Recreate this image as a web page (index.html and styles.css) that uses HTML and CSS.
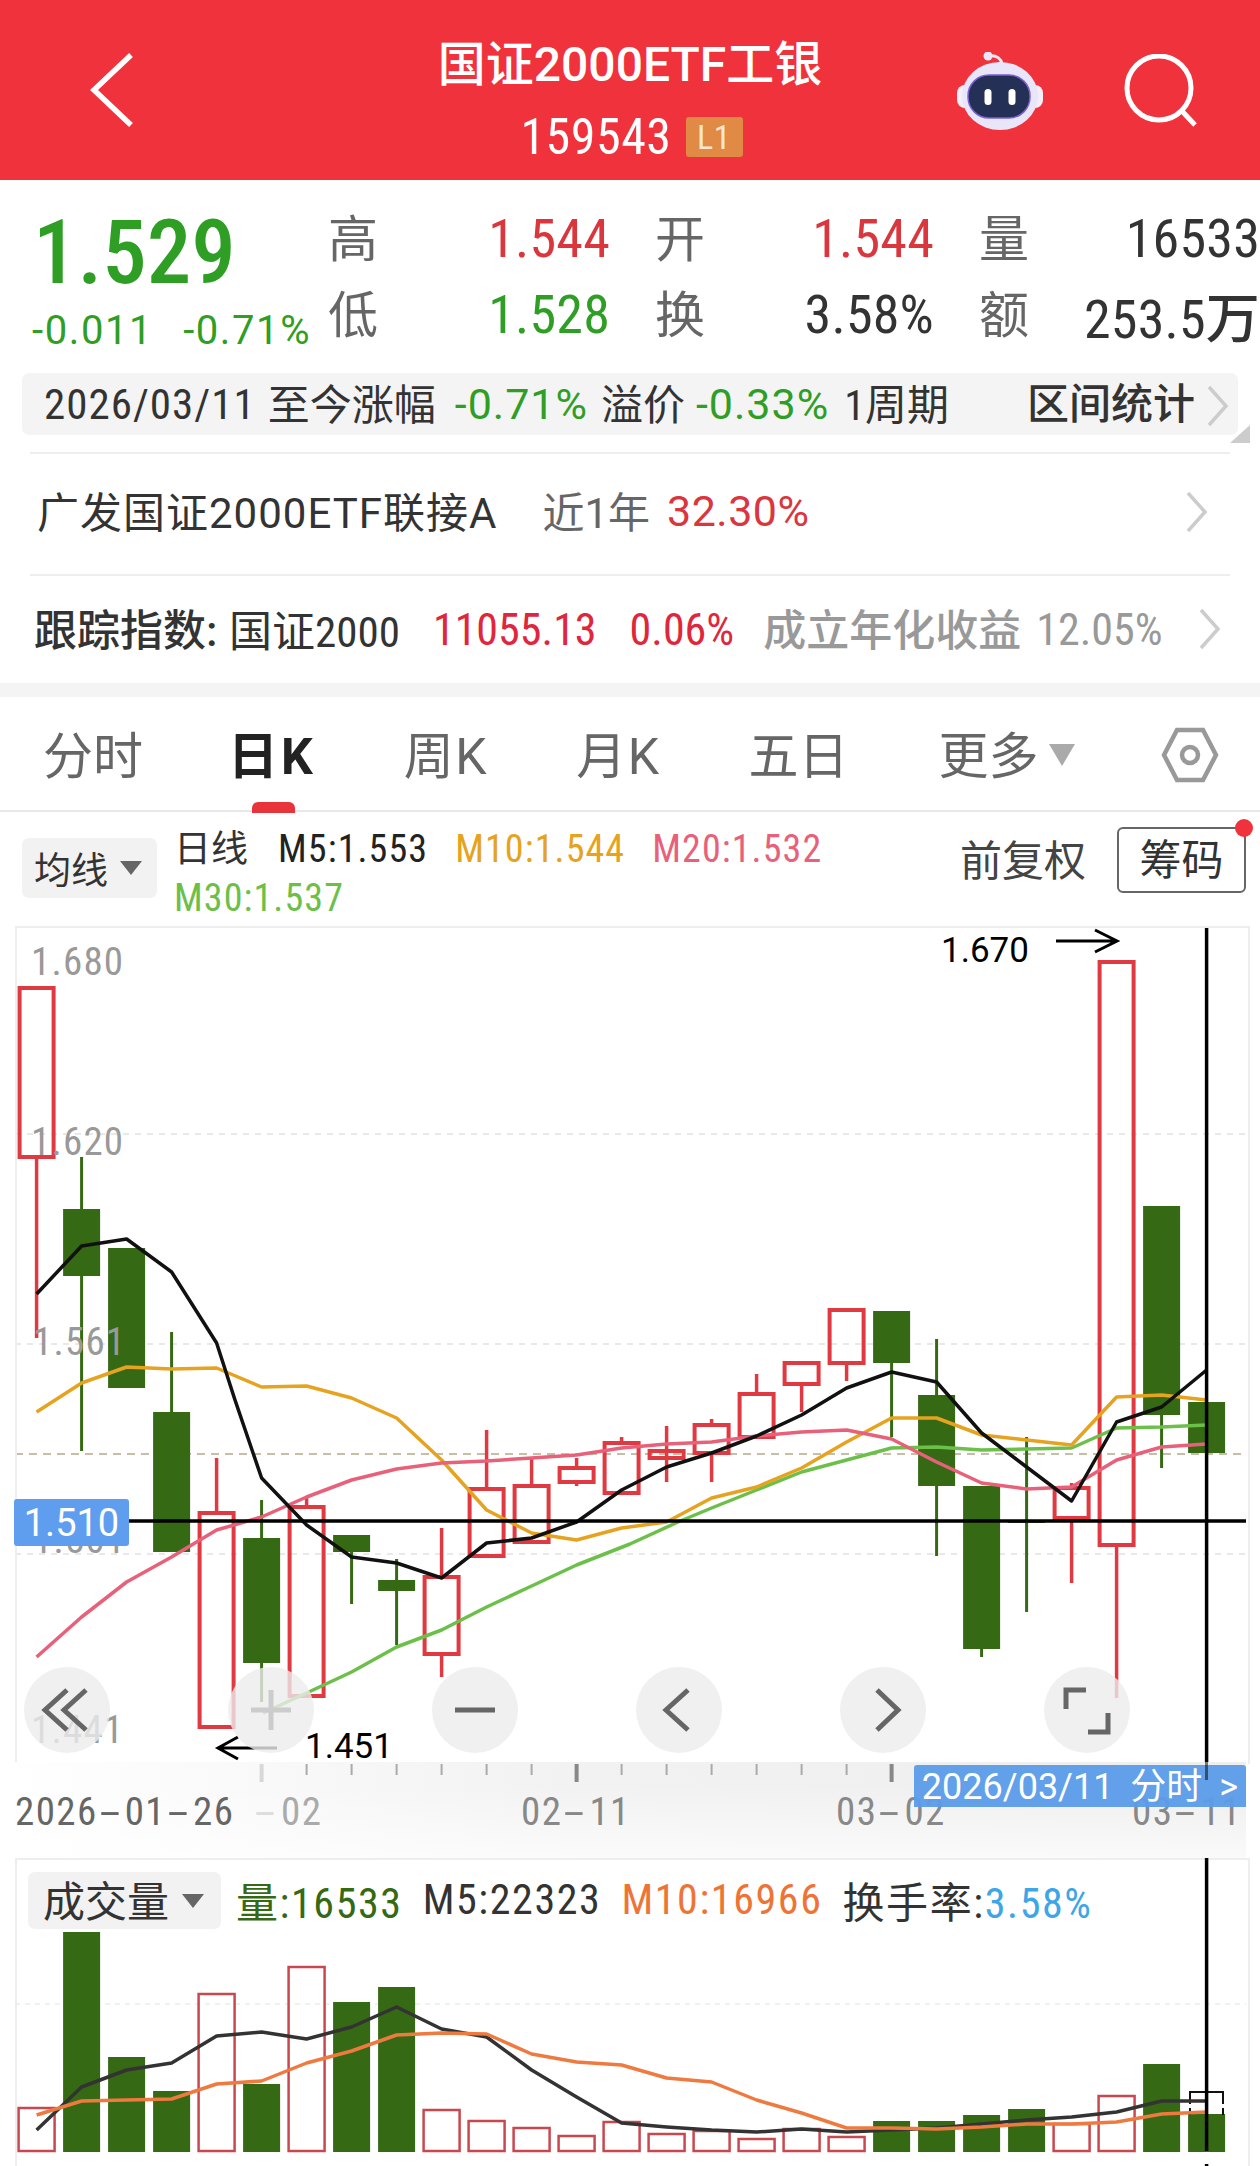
FILE: index.html
```html
<!DOCTYPE html>
<html lang="zh-CN">
<head>
    <meta charset="UTF-8">
    <meta name="viewport" content="width=device-width, initial-scale=1.0">
    <title>国证2000ETF工银</title>
    <link rel="stylesheet" href="styles.css">
</head>
<body>

    <div class="topbar">
        <div class="topbar-left">
            <svg class="back-icon" viewBox="0 0 44 76"><path d="M41 3 L4 38 L41 73"/></svg>
        </div>
        <div class="topbar-title">
            <div class="name">国证2000ETF工银</div>
            <div class="code">159543 <span class="badge">L1</span></div>
        </div>
        <div class="topbar-right">
            <svg class="robot-icon" viewBox="0 0 90 80">
                <path class="robot-wire" d="M34 4 C42 3 46 7 47 12"/>
                <circle class="robot-head" cx="33" cy="4" r="4.5"/>
                <rect class="robot-ear" x="2" y="33" width="86" height="23" rx="8"/>
                <ellipse class="robot-head" cx="45" cy="44" rx="38" ry="34"/>
                <rect class="robot-face" x="13" y="23" width="62" height="43" rx="21"/>
                <rect class="robot-eye" x="29.5" y="37" width="7" height="16" rx="3.5"/>
                <rect class="robot-eye" x="53.5" y="37" width="7" height="16" rx="3.5"/>
            </svg>
            <svg class="search-icon" viewBox="0 0 76 76"><circle cx="36" cy="34" r="32"/><path d="M58 56 L72 71"/></svg>
        </div>
    </div>

    <div class="quote">
        <div class="quote-main">
            <div class="price">
                <div class="price-now">1.529</div>
                <div class="price-change"><span>-0.011</span><span>-0.71%</span></div>
            </div>
            <div class="stats">
                <div class="stat"><span class="stat-label">高</span><span class="stat-value red">1.544</span></div>
                <div class="stat"><span class="stat-label">开</span><span class="stat-value red">1.544</span></div>
                <div class="stat"><span class="stat-label">量</span><span class="stat-value">16533</span></div>
                <div class="stat"><span class="stat-label">低</span><span class="stat-value green">1.528</span></div>
                <div class="stat"><span class="stat-label">换</span><span class="stat-value">3.58%</span></div>
                <div class="stat"><span class="stat-label">额</span><span class="stat-value">253.5万</span></div>
            </div>
        </div>
        <div class="period-bar">
            <span class="period-date">2026/03/11</span>
            <span class="period-cn">至今涨幅</span>
            <span class="period-num green">-0.71%</span>
            <span class="period-cn">溢价</span>
            <span class="period-num period-tight green">-0.33%</span>
            <span class="period-cn">1周期</span>
            <span class="period-link">区间统计</span>
            <svg class="chevron" viewBox="0 0 24 42"><path d="M3 2 L20 21 L3 40"/></svg>
            <span class="period-corner"></span>
        </div>
    </div>

    <div class="info-row fund-row">
        <span class="fund-name">广发国证2000ETF联接A</span>
        <span class="fund-term">近1年</span>
        <span class="fund-rate">32.30%</span>
        <svg class="chevron chevron-fund" viewBox="0 0 24 42"><path d="M3 2 L20 21 L3 40"/></svg>
    </div>

    <div class="info-row index-row">
        <span class="index-name">跟踪指数: </span>
        <span class="index-title">国证2000</span>
        <span class="index-num">11055.13</span>
        <span class="index-num index-pct">0.06%</span>
        <span class="index-gray">成立年化收益</span>
        <span class="index-gray-num">12.05%</span>
        <svg class="chevron chevron-index" viewBox="0 0 24 42"><path d="M3 2 L20 21 L3 40"/></svg>
    </div>

    <div class="band"></div>

    <div class="tabs">
        <span class="tab">分时</span>
        <span class="tab tab-active">日K</span>
        <span class="tab tab-k">周K</span>
        <span class="tab tab-k">月K</span>
        <span class="tab">五日</span>
        <span class="tab tab-more">更多<i class="tab-arrow"></i></span>
        <svg class="hex-icon" viewBox="0 0 58 56"><path d="M16 3 H42 L55 28 L42 53 H16 L3 28 Z"/><circle cx="29" cy="28" r="8"/></svg>
    </div>

    <div class="legend">
        <div class="select-box ma-select">均线<i class="select-arrow"></i></div>
        <div class="ma-values">
            <span class="ma-title">日线</span>
            <span class="ma ma5">M5:1.553</span>
            <span class="ma ma10">M10:1.544</span>
            <span class="ma ma20">M20:1.532</span>
            <span class="ma ma30">M30:1.537</span>
        </div>
        <span class="adjust">前复权</span>
        <span class="chip-btn">筹码<i class="chip-dot"></i></span>
    </div>

    <div class="kline">
        <svg class="kline-svg" viewBox="0 926 1260 836">
            <path class="grid" d="M15 1134 H1246 M15 1344 H1246 M15 1554 H1246"/>
            <path class="prev-close" d="M15 1454 H1246"/>

            <path class="wick-up" d="M36.6 1157V1338 M216.6 1458V1513 M306.6 1498V1507 M441.6 1528V1577 M441.6 1654V1677 M486.6 1430V1489 M531.6 1457V1486 M576.6 1458V1468 M576.6 1482V1486 M621.6 1437V1443 M666.6 1426V1482 M711.6 1419V1425 M711.6 1453V1482 M756.6 1374V1394 M801.6 1384V1412 M846.6 1363V1381 M1071.6 1483V1488 M1071.6 1518V1583 M1116.6 1545V1698"/>
            <path class="wick-down" d="M81.6 1157V1451 M171.6 1332V1412 M261.6 1500V1702 M351.6 1552V1604 M396.6 1559V1645 M891.6 1363V1437 M936.6 1339V1556 M981.6 1649V1657 M1026.6 1437V1612 M1161.6 1415V1468"/>

            <g class="body-up">
                <rect x="19.6" y="988" width="34" height="169"/>
                <rect x="199.6" y="1513" width="34" height="214"/>
                <rect x="289.6" y="1507" width="34" height="189"/>
                <rect x="424.6" y="1577" width="34" height="77"/>
                <rect x="469.6" y="1489" width="34" height="67"/>
                <rect x="514.6" y="1486" width="34" height="56"/>
                <rect x="559.6" y="1468" width="34" height="14"/>
                <rect x="604.6" y="1443" width="34" height="50"/>
                <rect x="649.6" y="1451" width="34" height="7"/>
                <rect x="694.6" y="1425" width="34" height="28"/>
                <rect x="739.6" y="1394" width="34" height="43"/>
                <rect x="784.6" y="1363" width="34" height="21"/>
                <rect x="829.6" y="1310" width="34" height="53"/>
                <rect x="1054.6" y="1488" width="34" height="30"/>
                <rect x="1099.6" y="962" width="34" height="583"/>
            </g>
            <g class="body-down">
                <rect x="63.1" y="1209" width="37" height="67"/>
                <rect x="108.1" y="1248" width="37" height="140"/>
                <rect x="153.1" y="1412" width="37" height="140"/>
                <rect x="243.1" y="1538" width="37" height="125"/>
                <rect x="333.1" y="1535" width="37" height="17"/>
                <rect x="378.1" y="1580" width="37" height="11"/>
                <rect x="873.1" y="1311" width="37" height="52"/>
                <rect x="918.1" y="1395" width="37" height="91"/>
                <rect x="963.1" y="1486" width="37" height="163"/>
                <rect x="1008.1" y="1520" width="37" height="3"/>
                <rect x="1143.1" y="1206" width="37" height="209"/>
                <rect x="1188.1" y="1402" width="37" height="51"/>
            </g>

            <text class="axis-num" x="31" y="975">1.680</text>
            <text class="axis-num" x="31" y="1155">1.620</text>
            <text class="axis-num" x="33" y="1355">1.561</text>
            <text class="axis-num" x="33" y="1553">1.501</text>
            <text class="axis-num" x="31" y="1743">1.441</text>

            <polyline class="line-ma30" points="263,1713 306.6,1693 351.6,1672 396.6,1647 441.6,1630 486.6,1607 531.6,1586 576.6,1565 630,1544 678,1522 711.6,1508 756.6,1490 801.6,1472 846.6,1460 891.6,1448 936.6,1447 981.6,1450 1026.6,1449 1071.6,1448 1116.6,1428 1161.6,1427 1206.6,1425"/>
            <polyline class="line-ma10" points="36.6,1412 81.6,1383 126.6,1367 171.6,1369 216.6,1368 261.6,1387 306.6,1386 351.6,1398 396.6,1418 441.6,1460 486.6,1510 531.6,1533 576.6,1540 621.6,1528 666.6,1522 711.6,1498 756.6,1487 801.6,1468 846.6,1442 891.6,1418 936.6,1418 981.6,1435 1026.6,1440 1071.6,1445 1116.6,1397 1161.6,1395 1206.6,1400"/>
            <polyline class="line-ma20" points="36.6,1657 81.6,1617 126.6,1582 171.6,1557 216.6,1530 261.6,1517 306.6,1497 351.6,1480 396.6,1469 441.6,1463 486.6,1461 531.6,1458 576.6,1455 621.6,1448 666.6,1444 711.6,1442 756.6,1436 801.6,1432 846.6,1430 891.6,1439 936.6,1462 981.6,1483 1026.6,1489 1071.6,1487 1116.6,1460 1161.6,1447 1206.6,1444"/>
            <polyline class="line-ma5" points="36.6,1294 81.6,1246 126.6,1239 171.6,1272 216.6,1343 235,1400 261.6,1478 306.6,1525 351.6,1557 396.6,1563 441.6,1578 486.6,1543 531.6,1538 576.6,1522 621.6,1490 666.6,1467 711.6,1453 756.6,1436 801.6,1415 846.6,1388 891.6,1372 936.6,1382 981.6,1433 1026.6,1467 1071.6,1501 1116.6,1422 1161.6,1407 1206.6,1370"/>

            <path class="cross" d="M129 1521 H1246 M1206.6 926 V1762"/>

            <text class="mark-num" x="941" y="962">1.670</text>
            <path class="mark-arrow" d="M1056 941 H1116 M1095 930 L1117 941 L1095 952"/>
            <text class="mark-num" x="305" y="1758">1.451</text>
            <path class="mark-arrow" d="M277 1748 H218 M238 1737 L218 1748 L238 1759"/>
        </svg>

        <div class="price-tag">1.510</div>

        <div class="tools">
            <span class="tool"><svg viewBox="0 0 86 86"><path d="M43 23 L21 43 L43 63 M62 23 L40 43 L62 63"/></svg></span>
            <span class="tool tool-faint"><svg viewBox="0 0 86 86"><path d="M23 43 H63 M43 23 V63"/></svg></span>
            <span class="tool"><svg viewBox="0 0 86 86"><path d="M23 43 H63"/></svg></span>
            <span class="tool"><svg viewBox="0 0 86 86"><path d="M52 23 L30 43 L52 63"/></svg></span>
            <span class="tool"><svg viewBox="0 0 86 86"><path d="M37 23 L58 43 L37 63"/></svg></span>
            <span class="tool"><svg viewBox="0 0 86 86"><path d="M22 42 V23 H42 M44 65 H64 V46"/></svg></span>
        </div>
    </div>

    <div class="time-axis">
        <svg class="ticks" viewBox="0 1762 1260 30">
            <path d="M306.6 1764V1775 M351.6 1764V1775 M396.6 1764V1775 M441.6 1764V1775 M486.6 1764V1775 M531.6 1764V1775 M621.6 1764V1775 M666.6 1764V1775 M711.6 1764V1775 M756.6 1764V1775 M801.6 1764V1775 M846.6 1764V1775"/>
            <path class="tick-faint" d="M261.6 1764V1782"/>
            <path class="tick-major" d="M576.6 1764V1782 M891.6 1764V1782"/>
        </svg>
        <span class="time-label time-first">2026<b>-</b>01<b>-</b>26</span>
        <span class="time-label time-faint"><b class="time-dash">-</b>02</span>
        <span class="time-label time-mid">02<b>-</b>11</span>
        <span class="time-label time-mar">03<b>-</b>02</span>
        <span class="time-label time-last">03<b>-</b>11</span>
        <div class="time-tag">2026/03/11 分时 &gt;</div>
        <i class="cross-tail"></i>
    </div>

    <div class="volume">
        <svg class="volume-svg" viewBox="0 1858 1260 308">
            <path class="grid-faint" d="M15 2004 H1246"/>
            <g class="vol-up">
                <rect x="18.6" y="2108" width="36" height="43"/>
                <rect x="198.6" y="1994" width="36" height="157"/>
                <rect x="288.6" y="1967" width="36" height="184"/>
                <rect x="423.6" y="2110" width="36" height="41"/>
                <rect x="468.6" y="2121" width="36" height="30"/>
                <rect x="513.6" y="2128" width="36" height="23"/>
                <rect x="558.6" y="2136" width="36" height="15"/>
                <rect x="603.6" y="2122" width="36" height="29"/>
                <rect x="648.6" y="2134" width="36" height="17"/>
                <rect x="693.6" y="2131" width="36" height="20"/>
                <rect x="738.6" y="2139" width="36" height="12"/>
                <rect x="783.6" y="2129" width="36" height="22"/>
                <rect x="828.6" y="2137" width="36" height="14"/>
                <rect x="1053.6" y="2124" width="36" height="27"/>
                <rect x="1098.6" y="2096" width="36" height="55"/>
            </g>
            <g class="vol-down">
                <rect x="63.1" y="1932" width="37" height="220"/>
                <rect x="108.1" y="2057" width="37" height="95"/>
                <rect x="153.1" y="2091" width="37" height="61"/>
                <rect x="243.1" y="2084" width="37" height="68"/>
                <rect x="333.1" y="2002" width="37" height="150"/>
                <rect x="378.1" y="1987" width="37" height="165"/>
                <rect x="873.1" y="2121" width="37" height="31"/>
                <rect x="918.1" y="2121" width="37" height="31"/>
                <rect x="963.1" y="2115" width="37" height="37"/>
                <rect x="1008.1" y="2109" width="37" height="43"/>
                <rect x="1143.1" y="2064" width="37" height="88"/>
                <rect x="1188.1" y="2114" width="37" height="38"/>
            </g>
            <path class="vol-dash" d="M1190 2104 V2092 H1223 V2104 M1190 2108 V2115 M1223 2108 V2115"/>
            <polyline class="vol-ma5" points="36.6,2130 81.6,2087 126.6,2070 171.6,2063 216.6,2036 261.6,2032 306.6,2039 351.6,2027 396.6,2007 441.6,2029 486.6,2037 531.6,2070 576.6,2097 621.6,2123 666.6,2127 711.6,2130 756.6,2132 801.6,2129 846.6,2132 891.6,2130 936.6,2128 981.6,2124 1026.6,2120 1071.6,2117 1116.6,2112 1161.6,2101 1206.6,2101"/>
            <polyline class="vol-ma10" points="36.6,2115 81.6,2101 126.6,2100 171.6,2099 216.6,2084 261.6,2081 306.6,2063 351.6,2051 396.6,2035 441.6,2033 486.6,2034 531.6,2054 576.6,2062 621.6,2065 666.6,2078 711.6,2082 756.6,2100 801.6,2113 846.6,2128 891.6,2128 936.6,2129 981.6,2127 1026.6,2124 1071.6,2124 1116.6,2122 1161.6,2114 1206.6,2112"/>
            <path class="cross" d="M1206.6 1858 V2151 M1206.6 2164 V2166"/>
        </svg>
        <div class="vol-legend">
            <div class="select-box vol-select"><span class="vol-select-text">成交量</span><i class="select-arrow"></i></div>
            <span class="vol-item vol-green">量:16533</span>
            <span class="vol-item vol-dark">M5:22323</span>
            <span class="vol-item vol-orange">M10:16966</span>
            <span class="vol-item vol-dark">换手率:<span class="vol-blue">3.58%</span></span>
        </div>
    </div>

</body>
</html>
```
FILE: styles.css
```css
* {
    margin: 0;
    padding: 0;
    box-sizing: border-box;
}

html, body {
    width: 1260px;
    height: 2166px;
    overflow: hidden;
    background: white;
}

body {
    font-family: Roboto, 'Noto Sans CJK SC', sans-serif;
    font-stretch: 80%;
    color: #333;
}

i {
    font-style: normal;
}

.red { color: #d9363e; }
.green { color: #2e9e24; }

/* top bar */
.topbar {
    height: 180px;
    background: #f0323c;
    display: grid;
    grid-template-columns: 1fr 400px 1fr;
    color: white;
}

.topbar-left {
    padding: 52px 0 0 90px;
    display: flex;
}

.back-icon {
    width: 44px;
    height: 76px;
    fill: none;
    stroke: white;
    stroke-width: 5.5;
}

.topbar-title {
    text-align: center;
    padding-top: 35px;
}

.name {
    font-size: 48px;
    line-height: 60px;
    font-weight: 500;
    font-stretch: 100%;
}

.code {
    font-size: 50px;
    line-height: 50px;
    font-weight: 450;
    letter-spacing: 0.5px;
    margin: 17px 0 0 3px;
    display: flex;
    justify-content: center;
    align-items: center;
    gap: 14px;
}

.badge {
    width: 57px;
    height: 40px;
    background: #e08a45;
    border-radius: 3px;
    font-size: 34px;
    line-height: 40px;
    font-weight: 400;
    color: #fbe6d2;
}

.topbar-right {
    display: flex;
    justify-content: flex-end;
    align-items: flex-start;
    gap: 78px;
    padding: 54px 61px 0 0;
}

.robot-icon {
    width: 90px;
    height: 80px;
    margin-top: -2px;
}

.robot-wire {
    fill: none;
    stroke: #f5e8f3;
    stroke-width: 3;
}

.robot-head { fill: #e8e6f8; }
.robot-ear { fill: #f3eef8; }

.robot-face {
    fill: #243056;
    stroke: #7a62cf;
    stroke-width: 1.5;
}

.robot-eye { fill: white; }

.search-icon {
    width: 76px;
    height: 76px;
    fill: none;
    stroke: white;
    stroke-width: 5;
}

/* quote */
.quote {
    height: 273px;
    position: relative;
}

.quote::after {
    content: "";
    position: absolute;
    left: 30px;
    right: 30px;
    bottom: -1px;
    height: 2px;
    background: #eee;
}

.quote-main {
    display: flex;
    padding: 20px 0 0 32px;
    height: 193px;
}

.price {
    width: 296px;
    color: #2e9e24;
}

.price-now {
    font-size: 89px;
    line-height: 86px;
    font-weight: 500;
    margin: 10px 0 0 1px;
}

.price-change {
    font-size: 40px;
    line-height: 40px;
    font-stretch: 90%;
    letter-spacing: 1.6px;
    margin-top: 15px;
    display: flex;
    gap: 30px;
    white-space: nowrap;
}

.stats {
    display: grid;
    grid-template-columns: 280px 277px 279px;
    grid-auto-rows: 76px;
    column-gap: 47px;
}

.stat {
    display: flex;
    justify-content: space-between;
    align-items: center;
}

.stat-label {
    font-size: 50px;
    color: #666;
    margin-top: -6px;
}

.stat-value {
    font-size: 54px;
    font-weight: 450;
    letter-spacing: 0.2px;
    white-space: nowrap;
    margin-right: -2px;
}

.period-bar {
    margin-left: 22px;
    width: 1216px;
    height: 62px;
    background: #f4f4f4;
    border-radius: 7px;
    display: flex;
    align-items: center;
    padding-left: 22px;
    white-space: nowrap;
    position: relative;
    font-size: 43px;
}

.period-date {
    letter-spacing: 1px;
    margin-right: 12px;
}

.period-num {
    font-stretch: 92%;
    letter-spacing: 1px;
    margin: 0 13px 0 19px;
}

.period-tight {
    margin-left: 11px;
    margin-right: 15px;
}

.period-cn {
    font-size: 42px;
    margin-top: -6px;
}

.period-link {
    position: absolute;
    left: 1005px;
    top: 1px;
    font-size: 42px;
    line-height: 62px;
    font-weight: 500;
}

.chevron {
    width: 24px;
    height: 42px;
    fill: none;
    stroke: #ccc;
    stroke-width: 3.5;
}

.period-bar .chevron {
    position: absolute;
    left: 1184px;
    top: 12px;
}

.period-corner {
    position: absolute;
    left: 1208px;
    top: 52px;
    width: 0;
    height: 0;
    border-left: 20px solid transparent;
    border-bottom: 18px solid #ccc;
}

/* fund rows */
.info-row {
    display: flex;
    align-items: center;
    white-space: nowrap;
    position: relative;
    margin: 0 30px;
}

.fund-row {
    height: 123px;
    border-bottom: 2px solid #eee;
    padding: 0 0 9px 7px;
    font-size: 43px;
    font-stretch: 100%;
}

.fund-name {
    font-size: 42px;
    letter-spacing: 1px;
    color: #333;
}

.fund-term {
    color: #666;
    margin-left: 45px;
    font-size: 42px;
}

.fund-rate {
    color: #d9363e;
    font-weight: 450;
    margin: 3px 0 0 17px;
    letter-spacing: 0.5px;
}

.chevron-fund {
    position: absolute;
    left: 1155px;
    top: 38px;
}

.index-row {
    height: 107px;
    padding-left: 4px;
    font-size: 43px;
}

.index-name {
    font-weight: 500;
    color: #333;
    margin-top: -5px;
    width: 195px;
}

.index-title {
    color: #333;
    margin-top: -3px;
    font-size: 43px;
}

.index-num {
    color: #e0263c;
    margin-left: 33px;
    font-size: 44px;
}

.index-gray {
    color: #999;
    font-weight: 500;
    margin: -5px 0 0 29px;
}

.index-gray-num {
    color: #999;
    margin-left: 15px;
    font-size: 44px;
}

.chevron-index {
    position: absolute;
    left: 1168px;
    top: 32px;
}

.band {
    height: 14px;
    background: #f4f4f4;
}

/* tabs */
.tabs {
    height: 115px;
    border-bottom: 2px solid #e8e8e8;
    display: flex;
    align-items: center;
    padding-left: 43px;
    gap: 88px;
    position: relative;
    font-size: 50px;
    font-stretch: 100%;
    color: #666;
    white-space: nowrap;
}

.tab {
    display: flex;
    align-items: center;
    position: relative;
    padding-bottom: 4px;
}

.tab-k {
    letter-spacing: 1.5px;
}

.tab-active {
    color: #222;
    font-weight: 700;
    letter-spacing: 3px;
    margin-left: -3px;
}

.tab-active::after {
    content: "";
    position: absolute;
    left: 24px;
    bottom: -21px;
    width: 43px;
    height: 11px;
    background: #e8333b;
    border-radius: 6px 6px 0 0;
}

.tab-more {
    margin-left: 2px;
}

.tab-arrow {
    margin-left: 10px;
    margin-top: 6px;
    border-left: 13px solid transparent;
    border-right: 13px solid transparent;
    border-top: 22px solid #aaa;
}

.hex-icon {
    position: absolute;
    left: 1161px;
    top: 30px;
    width: 58px;
    height: 56px;
    fill: none;
    stroke: #999;
    stroke-width: 4.5;
}

/* legend under tabs */
.legend {
    height: 114px;
    display: flex;
    align-items: flex-start;
    padding-left: 22px;
    position: relative;
}

.select-box {
    background: #f2f2f2;
    border-radius: 7px;
    display: flex;
    align-items: center;
    white-space: nowrap;
}

.ma-select {
    width: 135px;
    height: 60px;
    margin-top: 26px;
    padding-left: 12px;
    font-size: 37px;
}

.select-arrow {
    margin-left: 12px;
    border-left: 11px solid transparent;
    border-right: 11px solid transparent;
    border-top: 14px solid #666;
}

.ma-values {
    width: 690px;
    margin: 13px 0 0 17px;
    display: flex;
    flex-wrap: wrap;
    font-size: 38px;
    line-height: 49px;
    white-space: nowrap;
}

.ma-title {
    font-size: 37px;
    margin-right: 30px;
    color: #333;
}

.ma {
    letter-spacing: 1.1px;
    margin-right: 27px;
}

.ma5 { color: #222; }
.ma10 { color: #e5a320; }
.ma20 { color: #e8617a; margin-right: 0; }
.ma30 { color: #6cc04a; flex-basis: 100%; }

.adjust {
    position: absolute;
    left: 960px;
    top: 15px;
    font-size: 42px;
    color: #444;
}

.chip-btn {
    position: absolute;
    left: 1117px;
    top: 15px;
    width: 129px;
    height: 66px;
    border: 2px solid #666;
    border-radius: 6px;
    font-size: 42px;
    line-height: 63px;
    text-align: center;
    color: #333;
}

.chip-dot {
    position: absolute;
    right: -9px;
    top: -10px;
    width: 18px;
    height: 18px;
    border-radius: 50%;
    background: #f0323c;
}

/* k-line chart */
.kline {
    height: 836px;
    position: relative;
}

.kline-svg {
    display: block;
    width: 1260px;
    height: 836px;
}

.kline::before {
    content: "";
    position: absolute;
    left: 15px;
    top: 0;
    width: 1231px;
    height: 836px;
    border: 2px solid #eee;
    border-bottom: 0;
}

.grid {
    stroke: #e2e2e2;
    stroke-width: 1.5;
    stroke-dasharray: 6 6;
    fill: none;
}

.prev-close {
    stroke: #b5a98c;
    stroke-width: 1.5;
    stroke-dasharray: 8 6;
    fill: none;
}

.wick-up {
    stroke: #df3a42;
    stroke-width: 3.5;
    fill: none;
}

.wick-down {
    stroke: #356914;
    stroke-width: 3;
    fill: none;
}

.body-up rect {
    fill: none;
    stroke: #df3a42;
    stroke-width: 4;
}

.body-down rect {
    fill: #356914;
}

.axis-num {
    font-size: 39px;
    letter-spacing: 1.2px;
    fill: #999;
}

.line-ma5, .line-ma10, .line-ma20, .line-ma30 {
    fill: none;
    stroke-width: 3.5;
    stroke-linejoin: round;
}

.line-ma5 { stroke: #111; }
.line-ma10 { stroke: #e5a320; }
.line-ma20 { stroke: #e8617a; }
.line-ma30 { stroke: #6cc04a; }

.cross {
    stroke: #000;
    stroke-width: 3.5;
    fill: none;
}

.mark-num {
    font-size: 35px;
    font-stretch: 100%;
    fill: #000;
}

.mark-arrow {
    fill: none;
    stroke: #000;
    stroke-width: 3;
}

.price-tag {
    position: absolute;
    left: 14px;
    top: 573px;
    width: 115px;
    height: 47px;
    border-radius: 3px;
    background: #5f9eef;
    color: white;
    font-size: 38px;
    font-stretch: 88%;
    line-height: 49px;
    text-align: center;
}

.tools {
    position: absolute;
    left: 24px;
    top: 741px;
    display: flex;
    gap: 118px;
}

.tool {
    width: 86px;
    height: 86px;
    border-radius: 50%;
    background: rgba(236, 236, 236, 0.8);
}

.tool svg {
    display: block;
    width: 86px;
    height: 86px;
    fill: none;
    stroke: #666;
    stroke-width: 5;
}

.tool-faint svg {
    stroke: #ccc;
}

/* time axis */
.time-axis {
    height: 96px;
    position: relative;
    margin-right: 14px;
    background:
        linear-gradient(180deg, rgba(255, 255, 255, 0) 25%, rgba(255, 255, 255, 0.7) 100%),
        linear-gradient(90deg, white 0, #f2f2f2 45%, #eee 100%);
    overflow: hidden;
}

.ticks {
    position: absolute;
    left: 0;
    top: 0;
    width: 1260px;
    height: 30px;
    fill: none;
    stroke: #aaa;
    stroke-width: 2;
}

.tick-major {
    stroke: #888;
    stroke-width: 4;
}

.tick-faint {
    stroke: #d8d8d8;
    stroke-width: 4;
}

.time-label {
    position: absolute;
    top: 31px;
    font-size: 39px;
    line-height: 38px;
    letter-spacing: 1.4px;
    color: #666;
    white-space: nowrap;
}

.time-label b {
    display: inline-block;
    font-weight: 400;
    margin: 0 8px;
    transform: scaleX(2.2);
}

.time-first { left: 15px; }
.time-faint { left: 255px; color: #aaa; }
.time-label .time-dash { color: #ddd; margin: 0 9px 0 6px; }
.time-mid { left: 521px; color: #888; }
.time-mar { left: 836px; color: #888; }
.time-last { left: 1132px; color: #888; }

.time-tag {
    position: absolute;
    left: 914px;
    top: 3px;
    width: 332px;
    height: 42px;
    background: rgba(92, 156, 232, 0.96);
    border-radius: 3px 3px 0 0;
    color: white;
    font-size: 36px;
    font-stretch: 90%;
    line-height: 44px;
    word-spacing: 8px;
    text-align: center;
    white-space: nowrap;
}

.cross-tail {
    position: absolute;
    left: 1205px;
    top: 0;
    width: 3px;
    height: 18px;
    background: rgba(0, 0, 0, 0.5);
}

/* volume */
.volume {
    height: 308px;
    position: relative;
}

.volume::before {
    content: "";
    position: absolute;
    left: 15px;
    top: 0;
    width: 1231px;
    height: 307px;
    border: 2px solid #eee;
}

.volume-svg {
    position: absolute;
    left: 0;
    top: 0;
    width: 1260px;
    height: 308px;
}

.grid-faint {
    stroke: #ececec;
    stroke-width: 1.5;
    stroke-dasharray: 5 5;
    fill: none;
}

.vol-up rect {
    fill: none;
    stroke: #c9484f;
    stroke-width: 2.5;
}

.vol-down rect {
    fill: #356914;
}

.vol-dash {
    fill: none;
    stroke: #111;
    stroke-width: 2;
}

.vol-ma5, .vol-ma10 {
    fill: none;
    stroke-width: 3.5;
    stroke-linejoin: round;
}

.vol-ma5 { stroke: #333; }
.vol-ma10 { stroke: #ee7a3f; }

.vol-legend {
    position: relative;
    display: flex;
    align-items: center;
    padding: 13px 0 0 28px;
    white-space: nowrap;
}

.vol-select {
    width: 193px;
    height: 57px;
    padding-left: 15px;
    font-size: 42px;
    margin-right: 15px;
}

.vol-select-text {
    margin-top: -5px;
}

.vol-select .select-arrow {
    margin-left: 13px;
}

.vol-item {
    font-size: 42px;
    margin-right: 20px;
    letter-spacing: 1.6px;
    margin-top: -2px;
}

.vol-green { color: #356914; }
.vol-dark { color: #333; }
.vol-orange { color: #ee7435; }
.vol-blue { color: #3ea6e6; }
```
